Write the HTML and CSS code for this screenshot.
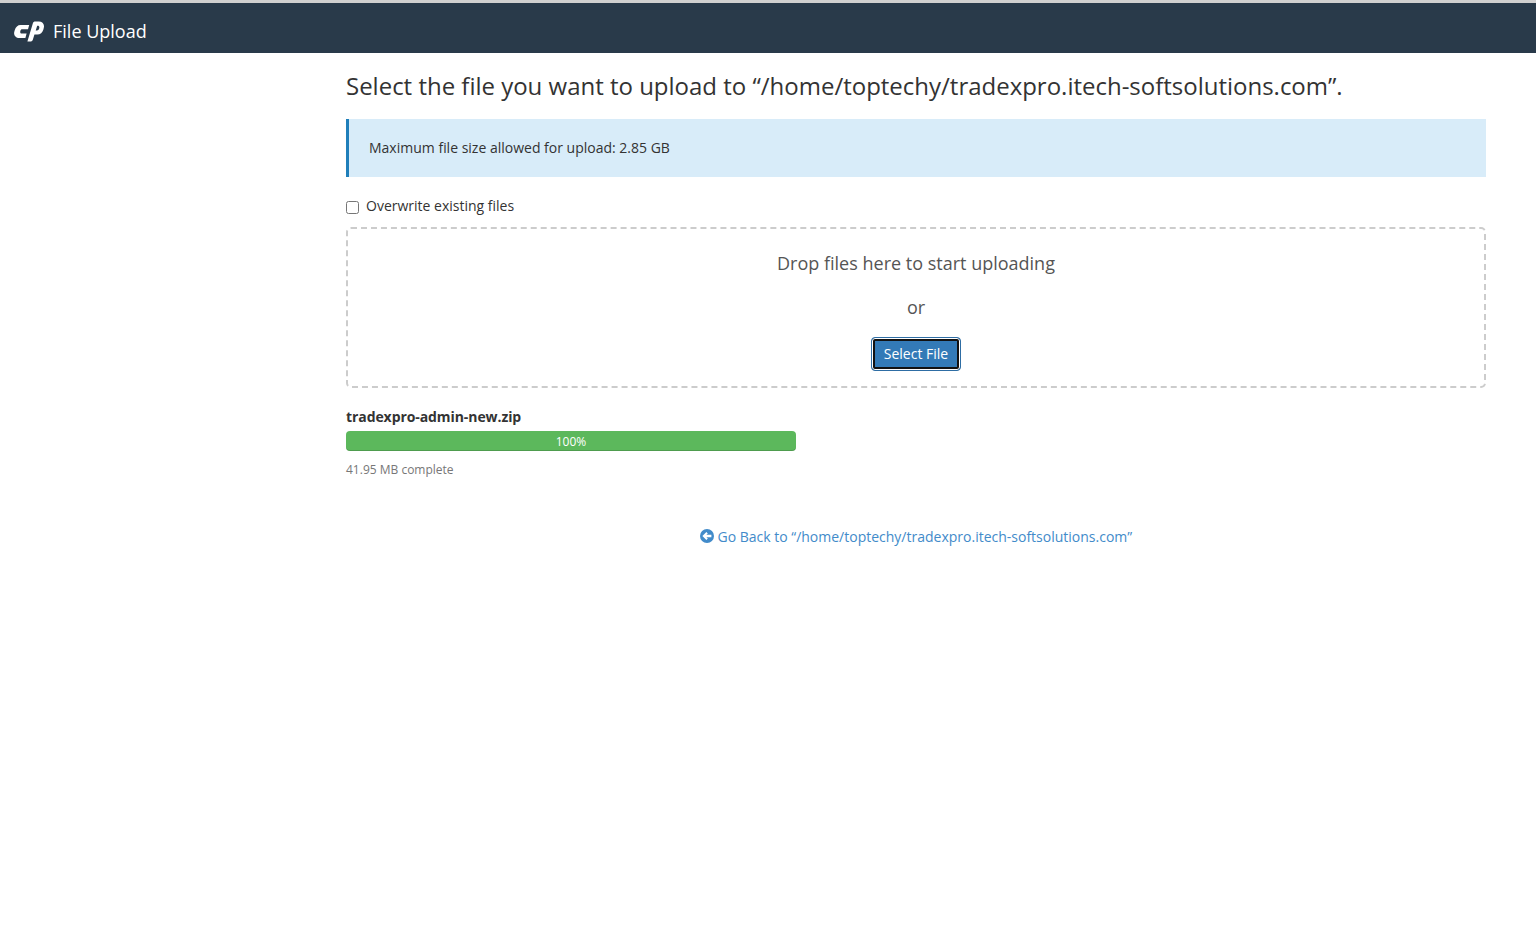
FILE: index.html
```html
<!DOCTYPE html>
<html lang="en">

<head>
    <meta charset="UTF-8">
    <meta name="viewport" content="width=device-width, initial-scale=1.0">
    <title>File Upload</title>
    <link rel="stylesheet" href="styles.css">
</head>

<body>

    <!-- top bar -->
    <div class="topbar">
        <svg class="logo" viewBox="0 0 30 21" width="30" height="21">
            <path fill="#fff" d="M6.5 4H15.2L14 8.2H8.4C7.4 8.2 6.8 8.7 6.5 9.5L6.3 10.3C6 11.5 6.6 12.6 7.8 12.6H12.6L11.4 17H5.4C1.6 17 -.6 14 .3 10.8L.8 9C1.6 6 3.8 4 6.5 4Z"/>
            <path fill="#fff" d="M13.4 20.6 18.8 2.6C19.2 1.2 20 .6 21.4 .6H24.8C28.6 .6 30.7 3.4 29.8 6.8L29.4 8.4C28.6 11.4 26.2 13.6 23.4 13.6H19.4L20.6 9.4H23C24 9.4 24.7 8.9 25 8L25.3 7C25.6 5.8 25 4.8 23.8 4.8H23.2L18.9 18.6C18.5 20 17.6 20.6 16.2 20.6Z"/>
        </svg>
        <span class="topbar-title">File Upload</span>
    </div>

    <div class="content">
        <h1 class="heading">Select the file you want to upload to “/home/toptechy/tradexpro.itech-softsolutions.com”.</h1>

        <div class="callout">Maximum file size allowed for upload: 2.85 GB</div>

        <label class="overwrite">
            <input type="checkbox" class="overwrite-box">
            <span>Overwrite existing files</span>
        </label>

        <!-- drop area -->
        <div class="dropzone">
            <div class="drop-text">Drop files here to start uploading</div>
            <div class="drop-or">or</div>
            <button class="select-btn" type="button">Select File</button>
        </div>

        <!-- upload status -->
        <div class="upload">
            <div class="upload-name">tradexpro-admin-new.zip</div>
            <div class="progress">100%</div>
            <div class="upload-size">41.95 MB complete</div>
        </div>

        <div class="back">
            <a href="#" class="back-link">
                <svg class="back-icon" viewBox="0 0 14 14" width="14" height="14">
                    <circle cx="7" cy="7" r="7" fill="#428bca"/>
                    <path fill="#fff" d="M2.4 7 6.4 3 7.8 4.4 6.4 5.8H11.4V8.2H6.4L7.8 9.6 6.4 11Z"/>
                </svg>
                Go Back to “/home/toptechy/tradexpro.itech-softsolutions.com”
            </a>
        </div>
    </div>
</body>

</html>
```

FILE: styles.css
```css
* {
    box-sizing: border-box;
}

body {
    margin: 0;
    background-color: #fff;
    color: #333;
    font-family: "Open Sans", sans-serif;
    font-size: 14px;
    line-height: 20px;
}

.topbar {
    height: 53px;
    border-top: 3px solid #d0d0d0;
    background-color: #293a4a;
    padding: 6px 14px 0;
    display: flex;
    align-items: center;
    color: #fff;
}

.logo {
    margin-right: 9px;
    flex: none;
}

.topbar-title {
    font-size: 18px;
}

.content {
    width: 1140px;
    margin-left: 346px;
}

.heading {
    margin: 0;
    padding-top: 16px;
    font-size: 24px;
    font-weight: 400;
    line-height: 33px;
    letter-spacing: -.01px;
}

.callout {
    margin-top: 17px;
    height: 58px;
    padding: 19px 20px;
    border-left: 3px solid #1f7fba;
    background-color: #d8ecf9;
}

.overwrite {
    margin-top: 19px;
    display: flex;
    align-items: center;
    height: 20px;
}

.overwrite-box {
    width: 13px;
    height: 13px;
    margin: 2px 7px 0 0;
}

.dropzone {
    margin-top: 11px;
    height: 161px;
    border: 2px dashed #ccc;
    border-radius: 5px;
    padding-top: 22px;
    text-align: center;
    color: #555;
}

.drop-text {
    font-size: 18px;
    line-height: 25px;
}

.drop-or {
    margin-top: 19px;
    font-size: 18px;
    line-height: 25px;
}

.select-btn {
    display: block;
    margin: 17px auto 0;
    padding: 0 0 2px;
    width: 90px;
    height: 34px;
    border: 1px solid #2e6da4;
    border-radius: 4px;
    background-color: #337ab7;
    color: #fff;
    font-family: inherit;
    font-size: 14px;
    box-shadow: inset 0 0 0 1px #fff, inset 0 0 0 3px #111;
}

.upload {
    margin-top: 19px;
}

.upload-name {
    font-weight: 700;
    letter-spacing: -.08px;
}

.progress {
    margin-top: 4px;
    width: 450px;
    height: 20px;
    border-radius: 4px;
    background-color: #5cb85c;
    box-shadow: inset 0 -1px 0 rgba(0, 0, 0, .15);
    color: #fff;
    font-size: 12px;
    line-height: 22px;
    text-align: center;
}

.upload-size {
    margin-top: 9px;
    color: #777;
    font-size: 12px;
}

.back {
    margin-top: 47px;
    text-align: center;
}

.back-link {
    color: #428bca;
    text-decoration: none;
}

.back-icon {
    vertical-align: -1px;
}
```
